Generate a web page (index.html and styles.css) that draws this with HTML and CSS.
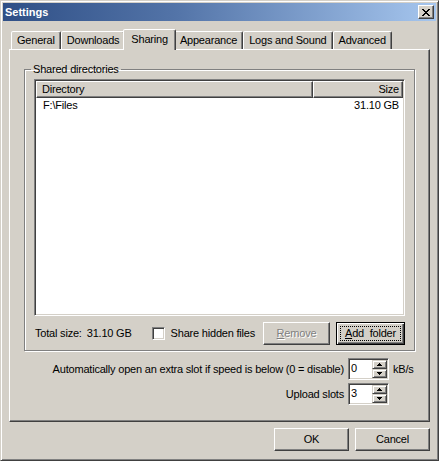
FILE: index.html
```html
<!DOCTYPE html>
<html>
<head>
<meta charset="utf-8">
<title>Settings</title>
<link rel="stylesheet" href="styles.css">
</head>
<body>
<div class="window">
  <div class="titlebar">
    <span class="title">Settings</span>
    <button class="close" aria-label="Close">
      <svg width="8" height="7" viewBox="0 0 8 7" shape-rendering="crispEdges"><path d="M0 0h2v1H0zM6 0h2v1H6zM1 1h2v1H1zM5 1h2v1H5zM2 2h4v1H2zM3 3h2v1H3zM2 4h4v1H2zM1 5h2v1H1zM5 5h2v1H5zM0 6h2v1H0zM6 6h2v1H6z"/></svg>
    </button>
  </div>
  <div class="body">
    <div class="tabs">
      <div class="tab">General</div>
      <div class="tab">Downloads</div>
      <div class="tab active">Sharing</div>
      <div class="tab">Appearance</div>
      <div class="tab">Logs and Sound</div>
      <div class="tab">Advanced</div>
    </div>
    <div class="panel">
      <fieldset class="group">
        <legend>Shared directories</legend>
        <div class="list">
          <div class="list-head">
            <div class="head-cell col-dir">Directory</div>
            <div class="head-cell col-size">Size</div>
          </div>
          <div class="list-row">
            <div class="cell col-dir">F:\Files</div>
            <div class="cell col-size">31.10 GB</div>
          </div>
        </div>
        <div class="share-bar">
          <span class="total-label">Total size:</span>
          <span class="total-value">31.10 GB</span>
          <span class="check"></span>
          <span class="check-label">Share hidden files</span>
          <div class="share-actions">
            <button class="btn btn-remove" disabled><u>R</u>emove</button>
            <button class="btn btn-add default"><span class="focus"><u>A</u>dd&nbsp; folder</span></button>
          </div>
        </div>
      </fieldset>
      <div class="slots">
        <span class="slot-label">Automatically open an extra slot if speed is below (0 = disable)</span>
        <div class="spin">
          <span class="spin-value">0</span>
          <span class="spin-btns">
            <span class="spin-btn"><svg width="5" height="3" viewBox="0 0 5 3" shape-rendering="crispEdges"><path d="M2 0h1v1h1v1h1v1H0V2h1V1h1z"/></svg></span>
            <span class="spin-btn"><svg width="5" height="3" viewBox="0 0 5 3" shape-rendering="crispEdges"><path d="M0 0h5v1H4v1H3v1H2V2H1V1H0z"/></svg></span>
          </span>
        </div>
        <span class="slot-unit">kB/s</span>
        <span class="slot-label">Upload slots</span>
        <div class="spin">
          <span class="spin-value">3</span>
          <span class="spin-btns">
            <span class="spin-btn"><svg width="5" height="3" viewBox="0 0 5 3" shape-rendering="crispEdges"><path d="M2 0h1v1h1v1h1v1H0V2h1V1h1z"/></svg></span>
            <span class="spin-btn"><svg width="5" height="3" viewBox="0 0 5 3" shape-rendering="crispEdges"><path d="M0 0h5v1H4v1H3v1H2V2H1V1H0z"/></svg></span>
          </span>
        </div>
        <span class="slot-unit"></span>
      </div>
    </div>
    <div class="actions">
      <button class="btn btn-dialog">OK</button>
      <button class="btn btn-dialog">Cancel</button>
    </div>
  </div>
</div>
</body>
</html>
```

FILE: styles.css
```css
* { box-sizing: border-box; }

body {
  margin: 0;
  background: #d4d0c8;
  color: #000;
  font: 11px/13px "Liberation Sans", Arial, sans-serif;
  letter-spacing: -0.2px;
}

.window {
  width: 439px;
  height: 461px;
  background: #d4d0c8;
  border: 1px solid;
  border-color: #d4d0c8 #404040 #404040 #d4d0c8;
  box-shadow: inset 1px 1px #fff, inset -1px -1px #808080;
  padding: 2px;
  display: flex;
  flex-direction: column;
}

.titlebar {
  height: 18px;
  display: flex;
  align-items: center;
  justify-content: space-between;
  padding: 0 2px;
  background: linear-gradient(90deg, #2f4f86 0%, #5374a8 40%, #a6c6ee 100%);
  color: #fff;
}

.title {
  font-weight: bold;
  letter-spacing: 0;
}

.close {
  width: 16px;
  height: 14px;
  padding: 0;
  border: 1px solid;
  border-color: #fff #404040 #404040 #fff;
  box-shadow: inset -1px -1px #808080;
  background: #d4d0c8;
  display: flex;
  align-items: center;
  justify-content: center;
}

.body {
  flex: 1;
  display: flex;
  flex-direction: column;
  padding: 0 6px;
}

.tabs {
  display: flex;
  align-items: flex-end;
  height: 20px;
  margin-top: 8px;
  padding-left: 2px;
}

.tab {
  height: 18px;
  padding: 0 5px;
  border: 1px solid;
  border-bottom: 0;
  border-color: #fff #404040 transparent #fff;
  border-radius: 2px 2px 0 0;
  box-shadow: inset -1px 0 #808080;
  background: #d4d0c8;
  line-height: 16px;
  white-space: nowrap;
}

.tab.active {
  height: 21px;
  margin: 0 -2px -1px;
  padding: 0 7px;
  position: relative;
  z-index: 1;
  line-height: 18px;
}

.panel {
  height: 373px;
  border: 1px solid;
  border-color: #fff #404040 #404040 #fff;
  box-shadow: inset -1px -1px #808080;
  display: flex;
  flex-direction: column;
}

.group {
  margin: 13px 14px 0;
  padding: 3px 9px 5px;
  border: 1px solid #808080;
  box-shadow: inset 1px 1px #fff, 1px 1px #fff;
  min-width: 0;
}

.group legend {
  padding: 0 2px;
  margin-left: -3px;
  line-height: 13px;
}

.list {
  height: 237px;
  background: #fff;
  border: 1px solid;
  border-color: #808080 #fff #fff #808080;
  box-shadow: inset 1px 1px #404040, inset -1px -1px #d4d0c8;
  padding: 1px;
}

.list-head {
  display: flex;
  height: 17px;
}

.head-cell {
  border: 1px solid;
  border-color: #fff #404040 #404040 #fff;
  box-shadow: inset -1px -1px #808080;
  background: #d4d0c8;
  padding: 0 5px;
  line-height: 15px;
}

.col-dir { flex: 1; }

.col-size {
  width: 90px;
  text-align: right;
}

.head-cell.col-size { padding-right: 3px; }

.list-row {
  display: flex;
  line-height: 13px;
  padding-top: 1px;
}

.cell.col-dir { padding-left: 7px; }
.cell.col-size { padding-right: 4px; }

.share-bar {
  display: flex;
  align-items: center;
  height: 23px;
  margin-top: 6px;
  padding-left: 1px;
}

.total-value { margin-left: 5px; }

.check {
  width: 13px;
  height: 13px;
  margin-left: 20px;
  border: 1px solid;
  border-color: #808080 #fff #fff #808080;
  box-shadow: inset 1px 1px #404040, inset -1px -1px #d4d0c8;
  background: #fff;
}

.check-label { margin-left: 6px; }

.share-actions {
  margin-left: auto;
  display: flex;
  gap: 6px;
}

.btn {
  height: 23px;
  padding: 0;
  border: 1px solid;
  border-color: #fff #404040 #404040 #fff;
  box-shadow: inset -1px -1px #808080;
  background: #d4d0c8;
  color: #000;
  font: inherit;
  letter-spacing: inherit;
}

.btn-remove {
  width: 67px;
  color: #808080;
  text-shadow: 1px 1px #fff;
}

.btn-add {
  width: 69px;
  display: flex;
  padding: 3px;
}

.btn.default {
  border-color: #000;
  box-shadow: inset 1px 1px #fff, inset -1px -1px #404040, inset -2px -2px #808080;
}

.focus {
  flex: 1;
  display: flex;
  align-items: center;
  justify-content: center;
  border: 1px dotted #000;
  white-space: nowrap;
}

.slots {
  display: grid;
  grid-template-columns: 1fr 41px 36px;
  grid-auto-rows: 22px;
  column-gap: 4px;
  row-gap: 3px;
  align-items: center;
  margin-top: 7px;
}

.slot-label {
  text-align: right;
  white-space: nowrap;
}

.spin {
  display: flex;
  height: 22px;
  padding: 2px;
  border: 1px solid;
  border-color: #808080 #fff #fff #808080;
  box-shadow: inset 1px 1px #404040, inset -1px -1px #d4d0c8;
  background: #fff;
}

.spin-value {
  flex: 1;
  line-height: 14px;
}

.spin-btns {
  width: 15px;
  margin: -1px -1px -1px 0;
  display: flex;
  flex-direction: column;
}

.spin-btn {
  flex: 1;
  display: flex;
  align-items: center;
  justify-content: center;
  border: 1px solid;
  border-color: #d4d0c8 #404040 #404040 #d4d0c8;
  box-shadow: inset 1px 1px #fff, inset -1px -1px #808080;
  background: #d4d0c8;
}

.actions {
  display: flex;
  justify-content: flex-end;
  gap: 6px;
  margin-top: 6px;
}

.btn-dialog { width: 75px; }
```
